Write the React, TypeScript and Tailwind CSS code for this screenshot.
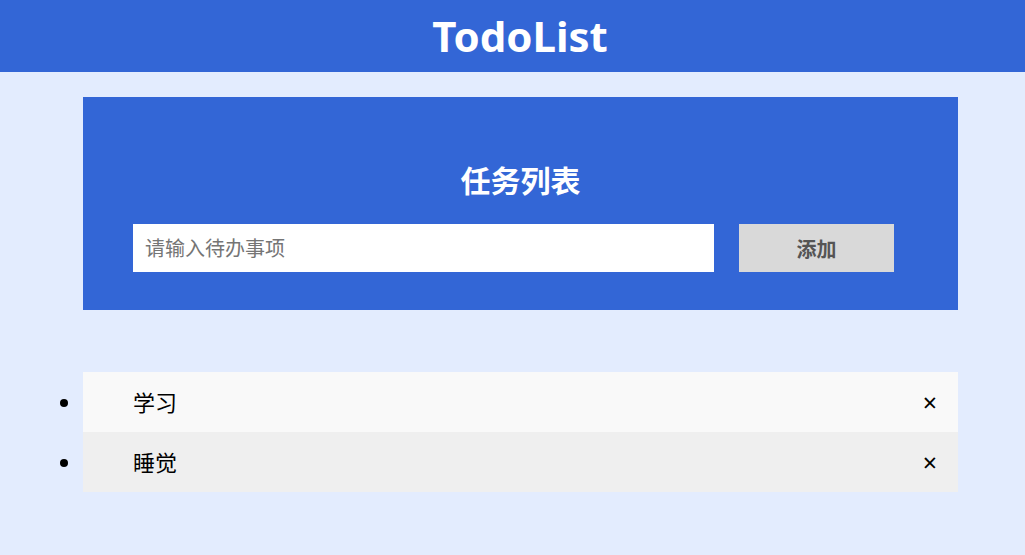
import { useState } from "react";

type Todo = { id: number; text: string };

export default function App() {
    const [todos, setTodos] = useState<Todo[]>([
        { id: 1, text: "学习" },
        { id: 2, text: "睡觉" },
    ]);
    const [value, setValue] = useState("");

    const addTodo = () => {
        const text = value.trim();
        if (!text) return;
        setTodos((prev) => [...prev, { id: Date.now(), text }]);
        setValue("");
    };

    const removeTodo = (id: number) => {
        setTodos((prev) => prev.filter((t) => t.id !== id));
    };

    return (
        <div
            className="min-h-[555px] bg-[#e3ecfe]"
            style={{ fontFamily: '"Noto Sans", "Noto Sans CJK SC", sans-serif' }}
        >
            <header className="flex h-[72px] items-center justify-center bg-[#3366d6] pl-[15px]">
                <h1 className="text-[42px] font-bold leading-none text-white">TodoList</h1>
            </header>

            <section className="mt-[25px] ml-[83px] w-[875px] bg-[#3366d6] px-[50px] pt-[66px] pb-[38px]">
                <h2 className="text-center text-[30px] font-bold leading-[36px] text-white">任务列表</h2>
                <div className="mt-[25px] flex gap-[25px]">
                    <input
                        value={value}
                        onChange={(e) => setValue(e.target.value)}
                        onKeyDown={(e) => e.key === "Enter" && addTodo()}
                        placeholder="请输入待办事项"
                        className="h-[48px] w-[581px] bg-white px-[12px] text-[20px] text-black outline-none placeholder:text-[#757575]"
                    />
                    <button
                        type="button"
                        onClick={addTodo}
                        className="h-[48px] w-[155px] bg-[#d9d9d9] pt-[3px] text-[20px] font-bold text-[#555555]"
                    >
                        添加
                    </button>
                </div>
            </section>

            <ul className="mt-[62px] ml-[83px] w-[875px] list-disc">
                {todos.map((todo, i) => (
                    <li
                        key={todo.id}
                        className={`h-[60px] text-[22px] text-black ${i % 2 === 0 ? "bg-[#f9f9f9]" : "bg-[#efefef]"}`}
                    >
                        <div className="flex h-full items-center justify-between pl-[50px] pr-[21px]">
                            <span>{todo.text}</span>
                            <button
                                type="button"
                                onClick={() => removeTodo(todo.id)}
                                className="text-[25px] leading-none text-black"
                            >
                                ×
                            </button>
                        </div>
                    </li>
                ))}
            </ul>
        </div>
    );
}
